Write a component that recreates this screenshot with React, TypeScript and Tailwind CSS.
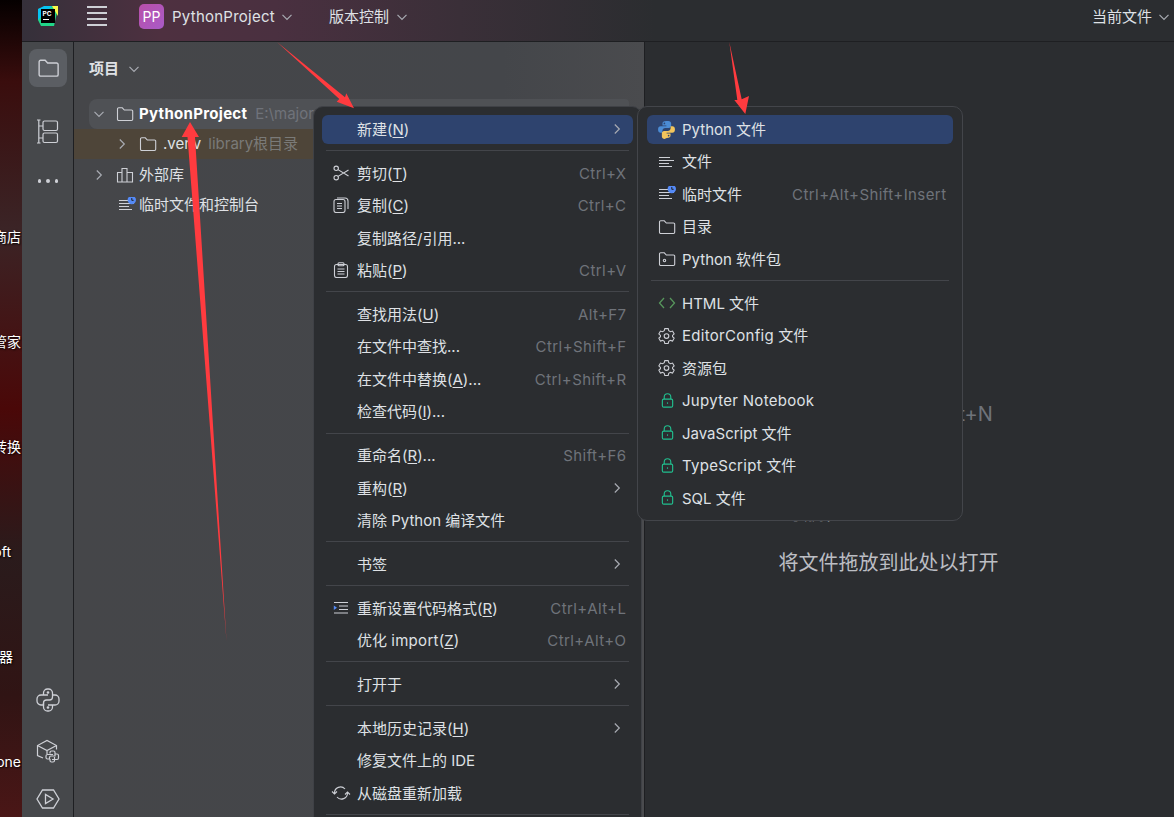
import type { ReactNode } from 'react';

const FONT = 'font-[Inter,"Noto_Sans_CJK_SC",sans-serif]';

function Chevron({ dir = 'down', className = '' }: { dir?: 'down' | 'right'; className?: string }) {
  return (
    <svg viewBox="0 0 12 12" className={`fill-none stroke-[#a8abb2] stroke-[1.2] ${className}`}>
      <path d={dir === 'down' ? 'M1.5 3.8 6 8.3l4.5-4.5' : 'M3.8 1.5 8.3 6l-4.5 4.5'} />
    </svg>
  );
}

function LinedIcon({ scratch = false }: { scratch?: boolean }) {
  return (
    <svg viewBox="0 0 18 16" className="h-4 w-[18px] fill-none stroke-[#ced0d6] stroke-[1.2]">
      <path d="M1 3.5h11M1 6.5h15M1 9.5h10M1 12.5h13" />
      {scratch && (
        <>
          <circle cx="13.8" cy="3" r="4.200" className="fill-[#548af7] stroke-none" />
          <path d="M13.8 1v2.300h1.800" className="stroke-[#1e1f22] stroke-1" />
        </>
      )}
    </svg>
  );
}

function FolderIcon({ className = 'h-4 w-[18px]', dot = false }: { className?: string; dot?: boolean }) {
  return (
    <svg viewBox="0 0 18 16" className={`fill-none stroke-[#ced0d6] stroke-[1.1] ${className}`}>
      <path d="M1.500 3a1.200 1.200 0 0 1 1.200-1.200h3.600l2 2.200h7.200a1.200 1.200 0 0 1 1.200 1.200v8.100a1.200 1.200 0 0 1-1.200 1.200H2.700a1.200 1.200 0 0 1-1.200-1.200z" />
      {dot && <circle cx="6.500" cy="9.500" r="1.200" />}
    </svg>
  );
}

function PythonColor() {
  return (
    <svg viewBox="0 0 18 18" className="-ml-px h-[19px] w-[19px]">
      <path d="M8.800 1C6 1 5.200 2 5.200 3.400v1.900h3.700v.6H3.500C2 5.900 1 7 1 9c0 2.100 1 3.100 2.400 3.100h1.700v-2c0-1.500 1.200-2.600 2.700-2.600h3.500c1.200 0 2.100-1 2.100-2.100V3.400C13.400 2 12.200 1 10.800 1z" fill="#4b8bd4" />
      <circle cx="7" cy="3.200" r=".8" fill="#2e436e" />
      <path d="M9.200 17c2.800 0 3.600-1 3.600-2.400v-1.900H9.100v-.6h5.400c1.500 0 2.500-1.100 2.500-3.100s-1-3.100-2.400-3.100h-1.700v2c0 1.500-1.200 2.600-2.700 2.600H6.700c-1.200 0-2.100 1-2.100 2.100v3c0 1.400 1.200 2.400 2.600 2.400z" fill="#f2c55c" />
      <circle cx="11" cy="14.800" r=".8" fill="#2e436e" />
    </svg>
  );
}

function Gear() {
  return (
    <svg viewBox="0 0 16 16" className="h-[17px] w-[17px] fill-none stroke-[#ced0d6] stroke-1">
      <path d="M6.400 1.500h3.200l.5 2 1.600.9 2-.6 1.500 2.700-1.500 1.400v1.200l1.500 1.400-1.500 2.700-2-.6-1.600.9-.5 2H6.400l-.5-2-1.600-.9-2 .6L.8 10.500l1.500-1.400V7.900L.8 6.500l1.500-2.700 2 .6 1.600-.9z" />
      <circle cx="8" cy="8.500" r="2.200" />
    </svg>
  );
}

function Lock() {
  return (
    <svg viewBox="0 0 16 16" className="ml-[2px] h-[17px] w-[15px] fill-none stroke-[#21c08f] stroke-[1.2]">
      <path d="M4.500 6.500V4.300a3.500 3.500 0 0 1 7 0v2.200" />
      <rect x="2.500" y="6.500" width="11" height="8.500" rx="1.500" />
      <path d="M8 10v1.500" />
    </svg>
  );
}

function Scissors() {
  return (
    <svg viewBox="0 0 16 16" className="h-4 w-4 fill-none stroke-[#ced0d6] stroke-[1.1]">
      <circle cx="3.200" cy="3.300" r="2.200" />
      <circle cx="3.200" cy="12.700" r="2.200" />
      <path d="M5 4.600 15.500 11M5 11.400 15.500 5" />
    </svg>
  );
}

function CopyIcon() {
  return (
    <svg viewBox="0 0 16 16" className="h-4 w-4 fill-none stroke-[#ced0d6] stroke-[1.1]">
      <rect x="1" y="2.500" width="11" height="13" rx="2" />
      <path d="M4 1h8a3 3 0 0 1 3 3v8M4 6.500h5M4 9h5M4 11.500h5" />
    </svg>
  );
}

function PasteIcon() {
  return (
    <svg viewBox="0 0 16 16" className="h-4 w-4 fill-none stroke-[#ced0d6] stroke-[1.1]">
      <rect x="1.500" y="2.500" width="13" height="13" rx="2" />
      <rect x="5" y=".8" width="6" height="3" rx="1" />
      <path d="M4.500 7h7M4.500 9.500h7M4.500 12h7" />
    </svg>
  );
}

function FormatIcon() {
  return (
    <svg viewBox="0 0 16 16" className="h-4 w-4 fill-none stroke-[#ced0d6] stroke-[1.2]">
      <path d="M1 2.500h14M6 6h9M6 9.500h9M1 13h14" />
      <path d="M.8 5.500 4 7.800.8 10z" className="fill-[#548af7] stroke-none" />
    </svg>
  );
}

function ReloadIcon() {
  return (
    <svg viewBox="0 0 20 16" className="-ml-[2px] h-4 w-5 fill-none stroke-[#ced0d6] stroke-[1.1]">
      <path d="M3.500 8a6 6 0 0 1 10.500-4M16.500 8a6 6 0 0 1-10.500 4" />
      <path d="M1 6.500 3.500 9 6 6.500M14 9.500 16.500 7l2.500 2.500" />
    </svg>
  );
}

function Mn({ children }: { children: ReactNode }) {
  return <span className="underline underline-offset-2">{children}</span>;
}

function Lat({ children }: { children: ReactNode }) {
  return <span className="tracking-[0.3px]">{children}</span>;
}

function Row({
  icon,
  children,
  shortcut,
  sub = false,
  active = false,
}: {
  icon?: ReactNode;
  children: ReactNode;
  shortcut?: string;
  sub?: boolean;
  active?: boolean;
}) {
  return (
    <div className="flex h-[32.500px] items-center text-[15px] text-[#dfe1e5]">
      <div
        className={`flex h-[29px] w-full items-center rounded-[6px] pl-[11px] pr-[6.500px] ${active ? 'bg-[#2e436e]' : ''}`}
      >
        <span className="flex w-[24px] shrink-0 items-center">{icon}</span>
        <span className="whitespace-nowrap pt-[2px]">{children}</span>
        {shortcut && (
          <span className="ml-auto whitespace-nowrap pt-[2px] tracking-[0.42px] text-[#6f737a]">{shortcut}</span>
        )}
        {sub && <Chevron dir="right" className="mr-1 ml-auto h-3 w-3" />}
      </div>
    </div>
  );
}

function Sep() {
  return <div className="mx-[4px] mt-[4.750px] mb-[5.500px] h-px bg-[#43454a]" />;
}

function MainMenu() {
  return (
    <div className="absolute left-[313px] top-[106px] w-[329px] rounded-[10px] border border-[#3f4146] bg-[#2b2d30] px-[8px] pt-[5.750px] pb-[5px]">
      <Row active sub>新建(<Mn>N</Mn>)</Row>
      <Sep />
      <Row icon={<Scissors />} shortcut="Ctrl+X">剪切(<Mn>T</Mn>)</Row>
      <Row icon={<CopyIcon />} shortcut="Ctrl+C">复制(<Mn>C</Mn>)</Row>
      <Row>复制路径/引用...</Row>
      <Row icon={<PasteIcon />} shortcut="Ctrl+V">粘贴(<Mn>P</Mn>)</Row>
      <Sep />
      <Row shortcut="Alt+F7">查找用法(<Mn>U</Mn>)</Row>
      <Row shortcut="Ctrl+Shift+F">在文件中查找...</Row>
      <Row shortcut="Ctrl+Shift+R">在文件中替换(<Mn>A</Mn>)...</Row>
      <Row>检查代码(<Mn>I</Mn>)...</Row>
      <Sep />
      <Row shortcut="Shift+F6">重命名(<Mn>R</Mn>)...</Row>
      <Row sub>重构(<Mn>R</Mn>)</Row>
      <Row>清除 Python 编译文件</Row>
      <Sep />
      <Row sub>书签</Row>
      <Sep />
      <Row icon={<FormatIcon />} shortcut="Ctrl+Alt+L">重新设置代码格式(<Mn>R</Mn>)</Row>
      <Row shortcut="Ctrl+Alt+O">优化 <Lat>import</Lat>(<Mn>Z</Mn>)</Row>
      <Sep />
      <Row sub>打开于</Row>
      <Sep />
      <Row sub>本地历史记录(<Mn>H</Mn>)</Row>
      <Row>修复文件上的 IDE</Row>
      <Row icon={<ReloadIcon />}>从磁盘重新加载</Row>
      <Sep />
    </div>
  );
}

function NewMenu() {
  return (
    <div className="absolute left-[637px] top-[106px] w-[326px] rounded-[10px] border border-[#43454a] bg-[#2b2d30] pt-[5.750px] pb-[6px] pl-[9px] pr-[9px]">
      <Row active icon={<PythonColor />}>Python 文件</Row>
      <Row icon={<LinedIcon />}>文件</Row>
      <Row icon={<LinedIcon scratch />} shortcut="Ctrl+Alt+Shift+Insert">临时文件</Row>
      <Row icon={<FolderIcon />}>目录</Row>
      <Row icon={<FolderIcon dot />}>Python 软件包</Row>
      <Sep />
      <Row
        icon={
          <svg viewBox="0 0 18 14" className="h-[14px] w-[18px] fill-none stroke-[#57965c] stroke-[1.3]">
            <path d="M6 2 1.500 7 6 12M12 2l4.500 5-4.500 5" />
          </svg>
        }
      >
        HTML 文件
      </Row>
      <Row icon={<Gear />}><Lat>EditorConfig</Lat> 文件</Row>
      <Row icon={<Gear />}>资源包</Row>
      <Row icon={<Lock />}><Lat>Jupyter Notebook</Lat></Row>
      <Row icon={<Lock />}>JavaScript 文件</Row>
      <Row icon={<Lock />}><Lat>TypeScript</Lat> 文件</Row>
      <Row icon={<Lock />}>SQL 文件</Row>
    </div>
  );
}

function Arrows() {
  return (
    <svg viewBox="0 0 1174 817" className="pointer-events-none absolute inset-0 h-[817px] w-[1174px]">
      <path d="M277 42 345 97.300 346.300 93.300 354 108.300 336.700 101.700 339.300 99z" fill="#ff3b3f" />
      <path d="M190 122 199 137 195 137 226.500 641 187.500 137 181.700 137z" fill="#ff3b3f" />
      <path d="M729.300 42 741.700 99.300 749 96 745.300 114 734.300 100 737.300 100z" fill="#ff3b3f" />
    </svg>
  );
}

function DesktopStrip() {
  const labels = [
    { text: '微软商店', pad: 'pr-px' },
    { text: '电脑管家', pad: 'pr-px' },
    { text: '格式转换', pad: 'pr-px' },
    { text: 'Microsoft', pad: 'pr-[11px]' },
    { text: '播放器', pad: 'pr-[9px]' },
    { text: 'iPhone', pad: 'pr-px' },
  ];
  return (
    <div className="flex w-[22px] shrink-0 flex-col overflow-hidden bg-[linear-gradient(180deg,#050000_0%,#3a0d0d_10%,#3b2426_28%,#4a0808_50%,#2a1b1c_68%,#301414_85%,#4a1616_100%)] pt-[184px]">
      {labels.map((l) => (
        <div
          key={l.text}
          className={`flex h-[105px] shrink-0 items-center justify-end whitespace-nowrap text-[14px] leading-none text-white [text-shadow:1px_1px_2px_#000] ${l.pad}`}
        >
          {l.text}
        </div>
      ))}
    </div>
  );
}

function TopBar() {
  return (
    <div className="flex h-[42px] shrink-0 items-center border-b border-[#1e1f22] bg-[linear-gradient(90deg,#35303a_0%,#4e3040_12%,#4a3040_22%,#3a2f38_38%,#2b2d30_55%)] pb-[9px] text-[15px] text-[#dfe1e5]">
      <svg viewBox="0 0 20 20" className="ml-[16px] h-5 w-5 shrink-0">
        <path d="M0 3 14 0l6 2-4 18H3l-3-6z" fill="#21d789" />
        <path d="M0 3 6 0h8L0 14z" fill="#07c3f2" />
        <path d="M14 0h6v10z" fill="#fcf84a" />
        <rect x="3" y="3" width="14" height="14" fill="#000" />
        <path d="M5 13.500h6" stroke="#fff" />
        <text x="4.500" y="9.500" fontSize="6.500" fontWeight="700" fill="#fff">PC</text>
      </svg>
      <div className="ml-[29px] flex h-[20px] w-5 shrink-0 flex-col justify-between">
        <span className="h-[2px] bg-[#ced0d6]" />
        <span className="h-[2px] bg-[#ced0d6]" />
        <span className="h-[2px] bg-[#ced0d6]" />
        <span className="h-[2px] bg-[#ced0d6]" />
      </div>
      <div className="ml-[32px] flex h-[25px] w-[25px] shrink-0 items-center justify-center rounded-[5px] bg-[linear-gradient(135deg,#b84fa8,#a95bc8)] text-[14px] text-white">
        PP
      </div>
      <span className="mt-[2px] ml-2 tracking-[0.25px]">PythonProject</span>
      <Chevron className="mt-[2px] ml-[6px] h-3 w-3" />
      <span className="mt-[2px] ml-[36px]">版本控制</span>
      <Chevron className="mt-[2px] ml-[7px] h-3 w-3" />
      <span className="mt-[2px] ml-auto">当前文件</span>
      <Chevron className="mt-[2px] mr-1 ml-[6px] h-3 w-3" />
    </div>
  );
}

function ToolStrip() {
  return (
    <div className="flex w-[52px] shrink-0 flex-col items-center border-r border-[#1e1f22] bg-[#46484b] pt-[7px] pb-[8px] pl-[1px]">
      <div className="flex h-[38px] w-[38px] items-center justify-center rounded-[8px] bg-[#5b5e63]">
        <FolderIcon className="h-5 w-[23px]" />
      </div>
      <svg viewBox="0 0 24 25" className="mt-[32px] h-[25px] w-6 fill-none stroke-[#ced0d6] stroke-[1.2]">
        <path d="M1 1h3.500M2.800 1v23M1 24h3.500M2.800 7H7M2.800 19H7" />
        <rect x="7" y="2" width="14.500" height="9.500" rx="1.500" />
        <rect x="7" y="14" width="14.500" height="9.500" rx="1.500" />
      </svg>
      <div className="mt-[35px] flex gap-[5px]">
        <span className="h-[3.500px] w-[3.500px] rounded-full bg-[#ced0d6]" />
        <span className="h-[3.500px] w-[3.500px] rounded-full bg-[#ced0d6]" />
        <span className="h-[3.500px] w-[3.500px] rounded-full bg-[#ced0d6]" />
      </div>
      <svg viewBox="0 0 24 24" className="mt-auto h-6 w-6 fill-none stroke-[#ced0d6] stroke-[1.3]">
        <path d="M7.500 7V5a4 4 0 0 1 4-4h1a4 4 0 0 1 4 4v4a3 3 0 0 1-3 3h-3a3 3 0 0 0-3 3v2H5a4 4 0 0 1-4-4v-2a4 4 0 0 1 4-4h7" />
        <path d="M12 17h7a4 4 0 0 0 4-4v-2a4 4 0 0 0-4-4h-2.500M7.500 15v4a4 4 0 0 0 4 4h1a4 4 0 0 0 4-4v-2" />
        <circle cx="12" cy="4.500" r=".7" />
        <circle cx="12" cy="19.500" r=".7" />
      </svg>
      <svg viewBox="0 0 24 24" className="mt-[27px] h-6 w-6 fill-none stroke-[#ced0d6] stroke-[1.2]">
        <path d="M7 19 1.500 16.500V6.500L11 1.500l9.500 5v4M1.500 6.500 11 11.500l9.500-5M11 11.500V15" />
        <path d="M14 14.500v-1a1.500 1.500 0 0 1 1.500-1.500h2a1.500 1.500 0 0 1 1.500 1.500V17h-4a1.500 1.500 0 0 0-1.500 1.500V20h-2a1.500 1.500 0 0 1-1.500-1.500V17a1.500 1.500 0 0 1 1.500-1.500H17" />
        <path d="M19 15h2a1.500 1.500 0 0 1 1.500 1.500V19a1.500 1.500 0 0 1-1.500 1.500h-5M18.500 18v3.500a1.500 1.500 0 0 1-1.500 1.500h-1.500a1.500 1.500 0 0 1-1.500-1.500V20" />
      </svg>
      <svg viewBox="0 0 24 20" className="mt-[26px] h-5 w-6 fill-none stroke-[#ced0d6] stroke-[1.3]">
        <path d="M6.500 1h11L23 10l-5.500 9h-11L1 10z" />
        <path d="M9.500 5.500v9l7.500-4.500z" />
      </svg>
    </div>
  );
}

function ProjectPanel() {
  return (
    <div className="flex w-[571px] shrink-0 flex-col border-r border-[#1e1f22] bg-[linear-gradient(90deg,#454649,#44464a_75%,#4a4b4e)] text-[15px] text-[#dfe1e5]">
      <div className="flex h-[57px] shrink-0 items-center pb-[3px] pl-[15px] font-semibold">
        项目
        <Chevron className="ml-[9px] h-3 w-3" />
      </div>
      <div className="ml-[15px] mr-[15px] flex h-[30px] items-center rounded-l-[8px] rounded-r-[4px] bg-[#4f5155] pl-[4px]">
        <Chevron className="h-3 w-3" />
        <FolderIcon className="ml-[11px] h-4 w-[18px]" />
        <span className="ml-[5px] pt-px font-bold tracking-[0.3px] text-white">PythonProject</span>
        <span className="ml-[8px] pt-px text-[#6f737a]">E:\major</span>
      </div>
      <div className="flex h-[30px] items-center bg-[#4e4539] pl-[42px]">
        <Chevron dir="right" className="h-3 w-3" />
        <FolderIcon className="ml-[11px] h-4 w-[18px]" />
        <span className="ml-[6px] pt-px">.venv</span>
        <span className="ml-[7px] pt-px text-[#7a7a78]">library根目录</span>
      </div>
      <div className="flex h-[31px] items-center pl-[19px]">
        <Chevron dir="right" className="h-3 w-3" />
        <svg viewBox="0 0 18 16" className="ml-[11px] h-4 w-[18px] fill-none stroke-[#ced0d6] stroke-[1.1]">
          <path d="M1.500 5.500h4.500V15H1.500zM6 1.500h5V15H6zM11 5.500h5.500V15H11z" />
        </svg>
        <span className="ml-[5px] pt-px">外部库</span>
      </div>
      <div className="flex h-[29px] items-center pl-[44px]">
        <LinedIcon scratch />
        <span className="ml-[3px] pt-px">临时文件和控制台</span>
      </div>
    </div>
  );
}

function Editor() {
  return (
    <div className="flex flex-1 flex-col items-center bg-[#2b2d30] pt-[347.500px] pr-[42px] text-[20px] text-[#bcbec4]">
      {/* only what shows around the popup menus */}
      <div className="grid grid-cols-[auto_auto] gap-x-[11px]">
        <span className="flex h-[49.500px] items-center whitespace-nowrap">转到文件</span>
        <span className="flex h-[49.500px] items-center whitespace-nowrap text-[#6f737a]">Ctrl+Shift+N</span>
        <span className="col-span-2 mt-[49.500px] flex h-[49.500px] items-center whitespace-nowrap">导航栏</span>
      </div>
      <div className="flex h-[49.500px] shrink-0 items-center whitespace-nowrap">将文件拖放到此处以打开</div>
    </div>
  );
}

export default function App() {
  return (
    <div className={`relative flex h-[817px] w-[1174px] overflow-hidden ${FONT}`}>
      <DesktopStrip />
      <div className="flex min-w-0 flex-1 flex-col">
        <TopBar />
        <div className="flex min-h-0 flex-1">
          <ToolStrip />
          <ProjectPanel />
          <Editor />
        </div>
      </div>
      <MainMenu />
      <NewMenu />
      <Arrows />
    </div>
  );
}
